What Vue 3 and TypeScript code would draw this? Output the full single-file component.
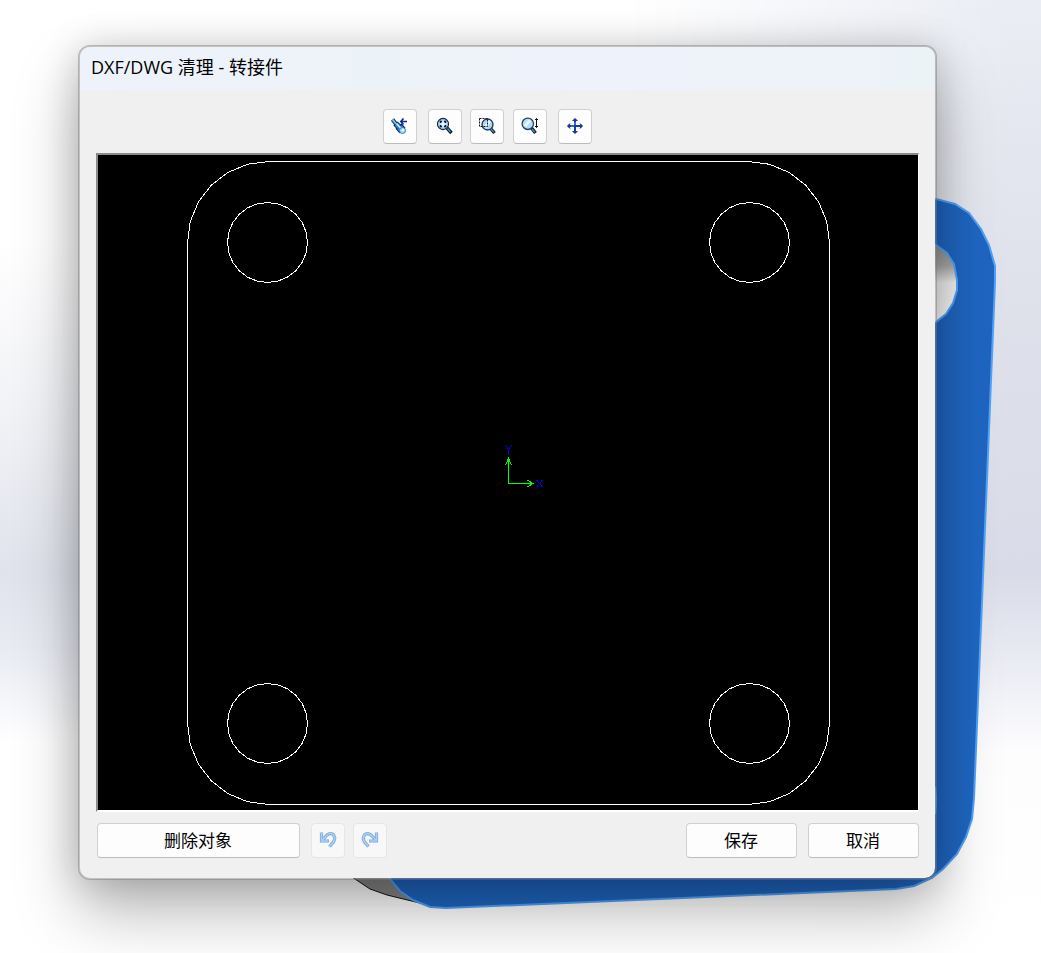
<script setup lang="ts">
interface Point {
  x: number
  y: number
}

const hole = 40
const holes: Point[] = [
  { x: 169.5, y: 87.5 },
  { x: 651.5, y: 87.5 },
  { x: 169.5, y: 568.5 },
  { x: 651.5, y: 568.5 },
]

function polygon(c: Point, r: number, segments: number): string {
  return Array.from({ length: segments }, (_, i) => {
    const a = (i / segments) * Math.PI * 2
    return `${(c.x + r * Math.cos(a)).toFixed(2)},${(c.y + r * Math.sin(a)).toFixed(2)}`
  }).join(' ')
}

function outline(left: number, top: number, right: number, bottom: number, r: number): string {
  const steps = 6
  const corners: [number, number, number][] = [
    [right - r, bottom - r, 0],
    [left + r, bottom - r, 90],
    [left + r, top + r, 180],
    [right - r, top + r, 270],
  ]
  const pts: string[] = []
  for (const [cx, cy, start] of corners) {
    for (let i = 0; i <= steps; i++) {
      const a = ((start + (90 * i) / steps) * Math.PI) / 180
      pts.push(`${(cx + r * Math.cos(a)).toFixed(2)},${(cy + r * Math.sin(a)).toFixed(2)}`)
    }
  }
  return pts.join(' ')
}

const plate = outline(89.5, 6.5, 731.5, 649.5, 81)
</script>

<template>
  <main class="workspace">
    <svg class="scene" viewBox="0 0 1041 953" preserveAspectRatio="xMidYMid slice" aria-hidden="true">
      <defs>
        <linearGradient id="left-haze" x1="0" y1="0" x2="0" y2="1">
          <stop offset="0.25" stop-color="#ffffff" />
          <stop offset="0.45" stop-color="#f0f1f5" />
          <stop offset="0.6" stop-color="#e0e3ec" />
          <stop offset="0.68" stop-color="#e9ebf3" />
          <stop offset="0.78" stop-color="#ffffff" />
        </linearGradient>
        <linearGradient id="right-haze" x1="0" y1="0" x2="0" y2="1">
          <stop offset="0" stop-color="#eaedf4" />
          <stop offset="0.3" stop-color="#dfe1eb" />
          <stop offset="0.6" stop-color="#d9dbe8" />
          <stop offset="0.66" stop-color="#e3e5ef" />
          <stop offset="0.79" stop-color="#fdfdfe" />
          <stop offset="1" stop-color="#ffffff" />
        </linearGradient>
        <linearGradient id="fade" x1="0" y1="0" x2="1" y2="0">
          <stop offset="0.6" stop-color="#000000" />
          <stop offset="0.97" stop-color="#ffffff" />
        </linearGradient>
        <mask id="right-side">
          <rect width="1041" height="953" fill="url(#fade)" />
        </mask>
        <linearGradient id="bore" x1="0" y1="0" x2="0" y2="1">
          <stop offset="0" stop-color="#8c8c8c" />
          <stop offset="0.25" stop-color="#a8a8a8" />
          <stop offset="0.45" stop-color="#f2f2f2" />
          <stop offset="1" stop-color="#ffffff" />
        </linearGradient>
      </defs>
      <rect width="1041" height="953" fill="url(#left-haze)" />
      <rect width="1041" height="953" fill="url(#right-haze)" mask="url(#right-side)" />
      <path d="M340 868 L355 879 L370 889 L387 895 L432 906 L445 860Z" fill="#858585" stroke="#101010" />
      <path
        d="M380 860 L390 879 L400 891 L413 900 L430 907 L446 908 L896 889 L914 886 L932 878 L943 869 L957 854 L966 837 L972 819 L974 798 L995 282 L995 266 L989 245 L981 229 L969 213 L955 204 L936 199 L880 190Z"
        fill="#1f66c2"
        stroke="#50a2fa"
        stroke-width="2"
      />
      <path
        d="M900 244 L936 245 L947 253 L954 264 L957 280 L957 290 L953 303 L946 314 L936 322 L900 330Z"
        fill="url(#bore)"
        stroke="#50a2fa"
        stroke-width="2"
      />
      <path d="M935 787 Q937 800 935 814" fill="none" stroke="#50a2fa" stroke-width="2" />
    </svg>

    <section class="dialog" role="dialog" aria-labelledby="dialog-title">
      <header class="titlebar">
        <h1 id="dialog-title" class="title">DXF/DWG 清理 - 转接件</h1>
      </header>

      <div class="toolbar" role="toolbar" aria-label="视图">
        <button type="button" class="tool" aria-label="上一视图">
          <svg class="icon" viewBox="0 0 20 21">
            <path d="M2.5 3.5 L6 8" stroke="#123a74" stroke-width="4" />
            <path d="M5.5 7.5 L9.5 11.5" stroke="#0a2148" stroke-width="6" />
            <path d="M8.5 10 L12.5 14.5" stroke="#0a2148" stroke-width="8" />
            <path d="M2.5 3.5 L6 8" stroke="#6cc4ee" stroke-width="2" />
            <path d="M6 8 L9.5 11.5" stroke="#2e86d0" stroke-width="4" />
            <path d="M9.5 11 L12 14" stroke="#2e86d0" stroke-width="6" />
            <path d="M6.5 7.5 L12 13.5" stroke="#c8f0ff" stroke-width="1.5" />
            <circle cx="12.5" cy="14.5" r="3" fill="#a8dcff" stroke="#2f77c4" />
            <circle cx="13" cy="14" r="1.2" fill="#fff" />
            <path d="M11 5.5 H17 M13.5 2.5 L10.8 5.5 L13.5 8.5" fill="none" stroke="#0b2699" stroke-width="1.6" />
          </svg>
        </button>
        <button type="button" class="tool gap-wide" aria-label="整屏显示全图">
          <svg class="icon" viewBox="0 0 20 21">
            <path d="M12 12 L16.5 17" stroke="#101828" stroke-width="3.4" />
            <path d="M12.5 12.5 L15.5 16" stroke="#3b91c4" stroke-width="1.4" />
            <circle cx="8" cy="8" r="5.5" fill="#bfe2fb" stroke="#17243c" stroke-width="1.3" />
            <circle cx="8" cy="8" r="4.4" fill="none" stroke="#8dbbe6" />
            <path d="M5.5 7 V5.5 H7 M9 5.5 H10.5 V7 M10.5 9 V10.5 H9 M7 10.5 H5.5 V9" fill="none" stroke="#0d1930" stroke-width="1.3" />
            <path d="M8 6 V10 M6 8 H10" stroke="#f4fbff" />
          </svg>
        </button>
        <button type="button" class="tool gap-narrow" aria-label="局部放大">
          <svg class="icon" viewBox="0 0 20 21">
            <path d="M14 13 L17.5 17" stroke="#101828" stroke-width="3.4" />
            <path d="M14 13 L16.8 16.2" stroke="#3b91c4" stroke-width="1.4" />
            <circle cx="10.5" cy="8.5" r="5.5" fill="#add5f5" stroke="#1a3359" stroke-width="1.3" />
            <path d="M8 11 L13 5" stroke="#e9f7ff" stroke-width="3" />
            <rect x="2.5" y="2.5" width="8" height="8" fill="none" stroke="#111" stroke-dasharray="2 1" />
          </svg>
        </button>
        <button type="button" class="tool gap" aria-label="动态放大缩小">
          <svg class="icon" viewBox="0 0 20 21">
            <path d="M11.5 12 L15.5 17" stroke="#101828" stroke-width="3.4" />
            <path d="M12 13 L14.8 16.2" stroke="#3b91c4" stroke-width="1.4" />
            <circle cx="7.8" cy="7.8" r="5.7" fill="#b5dcfa" stroke="#28415f" stroke-width="1.3" />
            <path d="M5 10 L10 4.5" stroke="#eaf7ff" stroke-width="3" />
            <path d="M16.5 2.5 V11.5 M15 4 L16.5 2.5 L18 4 M15 10 L16.5 11.5 L18 10" fill="none" stroke="#111" />
          </svg>
        </button>
        <button type="button" class="tool gap-wide" aria-label="平移">
          <svg class="icon" viewBox="0 0 20 21">
            <path d="M10 3 V17 M3 10 H17" stroke="#153ba5" stroke-width="2" />
            <path d="M7.5 5 L10 2.5 L12.5 5 M7.5 15 L10 17.5 L12.5 15 M5 7.5 L2.5 10 L5 12.5 M15 7.5 L17.5 10 L15 12.5" fill="#153ba5" stroke="#102d82" />
            <path d="M10 6 V9 M6 10 H9" stroke="#5f9cf5" />
          </svg>
        </button>
      </div>

      <div class="viewport">
        <svg class="drawing" viewBox="0 0 820 655" role="img" aria-label="转接件">
          <g fill="none" stroke="#fff" shape-rendering="crispEdges">
            <polygon :points="plate" />
            <polygon v-for="(c, i) in holes" :key="i" :points="polygon(c, hole, 24)" />
          </g>
          <g fill="none" shape-rendering="crispEdges">
            <path d="M410.5 304 V328.5 H435 M407.5 310 L410.5 303.5 L413.5 310 M429 325 L435 328.5 L429 332" stroke="#00ff00" />
            <path d="M407.5 290 L410.5 294.5 L413.5 290 M410.5 294 V300 M438.5 325 L444.5 332 M444.5 325 L438.5 332" stroke="#0000ff" />
          </g>
        </svg>
      </div>

      <footer class="actions">
        <button type="button" class="button delete">删除对象</button>
        <button type="button" class="tool gap-wide" aria-label="撤消" disabled>
          <svg class="icon" viewBox="0 0 20 21">
            <path d="M3.5 2.5 V11 H11 M4.5 10 L9 5 Q12 2.4 15 4.4 Q18 7.4 15.5 12 L11.5 16.5" fill="none" stroke="#7ba6da" stroke-width="3.2" />
            <path d="M3.5 3 V11 H10.4 M4.5 10 L9 5 Q12 2.4 15 4.4 Q18 7.4 15.5 12 L12 16" fill="none" stroke="#a6d2f7" stroke-width="1.6" />
          </svg>
        </button>
        <button type="button" class="tool gap-narrow" aria-label="重做" disabled>
          <svg class="icon mirrored" viewBox="0 0 20 21">
            <path d="M3.5 2.5 V11 H11 M4.5 10 L9 5 Q12 2.4 15 4.4 Q18 7.4 15.5 12 L11.5 16.5" fill="none" stroke="#7ba6da" stroke-width="3.2" />
            <path d="M3.5 3 V11 H10.4 M4.5 10 L9 5 Q12 2.4 15 4.4 Q18 7.4 15.5 12 L12 16" fill="none" stroke="#a6d2f7" stroke-width="1.6" />
          </svg>
        </button>
        <span class="spacer"></span>
        <button type="button" class="button">保存</button>
        <button type="button" class="button gap-wide">取消</button>
      </footer>
    </section>
  </main>
</template>

<style>
body {
  margin: 0;
}
</style>

<style scoped>
.workspace {
  position: relative;
  box-sizing: border-box;
  display: flex;
  min-height: 100vh;
  padding: 45px 104px 73px 78px;
  overflow: hidden;
  font-family: "Noto Sans", "Noto Sans CJK SC", sans-serif;
  color: #000;
}

.scene {
  position: absolute;
  inset: 0;
  width: 100%;
  height: 100%;
}

.dialog {
  position: relative;
  box-sizing: border-box;
  display: flex;
  flex: 1;
  flex-direction: column;
  border: 2px solid rgba(120, 120, 120, 0.45);
  border-radius: 12px;
  background: #f0f0f0;
  background-clip: padding-box;
  box-shadow: 0 32px 64px rgba(0, 0, 0, 0.28), 0 2px 36px rgba(0, 0, 0, 0.17);
}

.titlebar {
  box-sizing: border-box;
  display: flex;
  align-items: center;
  height: 43px;
  padding: 0 11px 4px;
  border-radius: 10px 10px 0 0;
  background: linear-gradient(90deg, #eef2fb, #ecf3f8 35%, #eef2fb 60%, #ecf3f7);
}

.title {
  margin: 0;
  font-family: "Open Sans", "Noto Sans CJK SC", sans-serif;
  font-size: 18px;
  font-weight: 400;
  line-height: 24px;
}

.toolbar {
  display: flex;
  justify-content: center;
  padding: 19px 40px 9px 0;
}

.tool,
.button {
  box-sizing: border-box;
  height: 35px;
  padding: 0;
  border: 1px solid #d0d0d0;
  border-bottom-color: #bcbcbc;
  border-radius: 4px;
  background: #fdfdfd;
  color: #000;
}

.tool {
  display: flex;
  align-items: center;
  justify-content: center;
  width: 34px;
}

.tool:disabled {
  border-color: #e6e6e6;
  background: #f8f8f8;
}

.button {
  width: 111px;
  padding: 0 1px 2px 0;
  font-family: "Noto Sans CJK SC", sans-serif;
  font-size: 17px;
  line-height: 24px;
}

.delete {
  width: 203px;
}

.icon {
  width: 20px;
  height: 21px;
  fill: none;
}

.mirrored {
  transform: scaleX(-1);
}

.gap-narrow {
  margin-left: 8px;
}

.gap {
  margin-left: 9px;
}

.gap-wide {
  margin-left: 11px;
}

.viewport {
  display: flex;
  flex: 1;
  min-height: 0;
  margin: 0 16px;
  border: 2px solid #8a8a8a;
  border-right: 1px solid #fff;
  border-bottom-color: #fff;
  background: #000;
}

.drawing {
  flex: 1;
  width: 100%;
  min-width: 0;
}

.actions {
  display: flex;
  padding: 11px 16px 20px 17px;
}

.spacer {
  flex: 1;
}
</style>
